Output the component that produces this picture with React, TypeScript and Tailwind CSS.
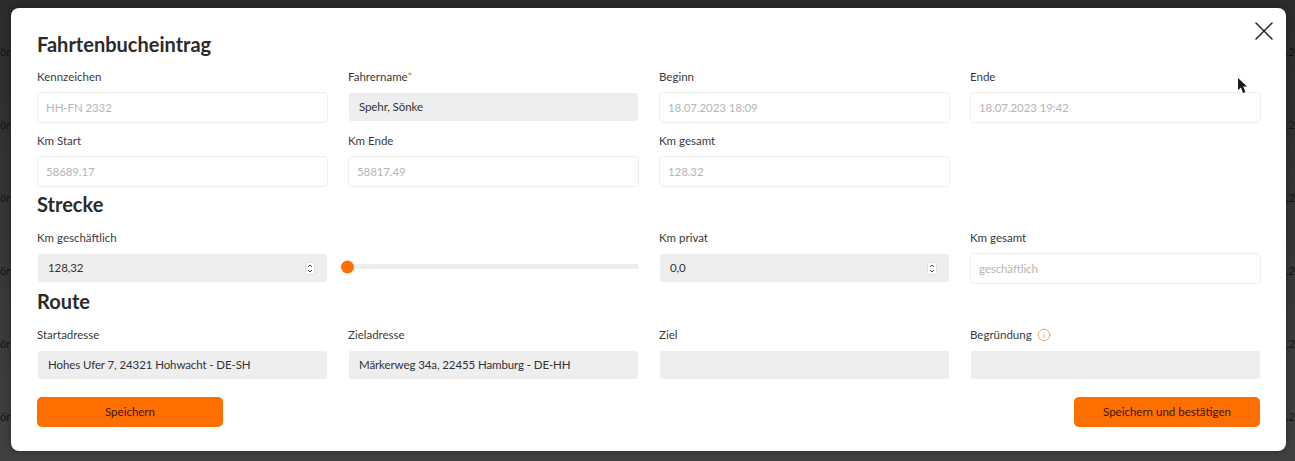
import { X, Info } from "lucide-react";

const font = "font-['Lato','Noto_Sans',sans-serif]";

const Label = ({ children }: { children: React.ReactNode }) => (
  <div className="h-[15px] text-[11.5px] leading-[15px] text-[#3a3a3a] mb-[8px]">{children}</div>
);

// white field with a pale border, value shown as placeholder
const OutlineInput = ({ label, value }: { label: React.ReactNode; value: string }) => (
  <div>
    <Label>{label}</Label>
    <div className="h-[31px] rounded-[4px] border border-[#eeeeee] bg-white pl-2 pr-2 flex items-center text-[11.5px] tracking-[-0.1px] text-[#b5b5b5]">
      {value}
    </div>
  </div>
);

const GreyInput = ({ label, value, spin }: { label: React.ReactNode; value?: string; spin?: boolean }) => (
  <div className="flex flex-col">
    <Label>{label}</Label>
    <div className="h-[28px] mt-px mx-px rounded-[2px] bg-[#eeeeee] pl-[10px] pr-3 flex items-center justify-between text-[11.5px] tracking-[-0.1px] text-[#333333]">
      <span>{value}</span>
      {spin && (
        <svg width="10" height="13" viewBox="0 0 10 13" fill="none" stroke="#444444" strokeWidth="1">
          <rect x="0.5" y="0.5" width="9" height="12" rx="2" fill="#ffffff" stroke="#d8d8d8" strokeWidth="0.75" />
          <path d="M3 5 5 3l2 2M3 8l2 2 2-2" />
        </svg>
      )}
    </div>
  </div>
);

const Heading = ({ children }: { children: React.ReactNode }) => (
  <h2 className="text-[20px] leading-[24px] font-bold text-[#2b2b2b]">{children}</h2>
);

const rows = [0, 1, 2, 3, 4, 5];

export default function App() {
  return (
    <div className={`${font} relative h-[461px] w-[1295px] overflow-hidden bg-gradient-to-b from-[#2c2c2c] to-[#414141]`}>
      {/* page behind the dialog */}
      <div className="pt-[44px] text-[11px] leading-[16px] text-[#141414]">
        {rows.map((i) => (
          <div key={i} className="flex h-[73px] justify-between">
            <span>ör</span>
            <span>.2</span>
          </div>
        ))}
      </div>

      <div className="absolute left-[11px] top-[8px] h-[443px] w-[1275px] rounded-[8px] bg-white pl-[26px] pr-[25px] pt-[24px] shadow-[0_0_8px_rgba(0,0,0,0.35)]">
        <button className="absolute right-[6px] top-[7px] text-[#222222]">
          <X size={32} strokeWidth={1.1} />
        </button>

        <Heading>Fahrtenbucheintrag</Heading>
        <div className="mt-[13px] grid grid-cols-4 gap-x-5 gap-y-[10px]">
          <OutlineInput label="Kennzeichen" value="HH-FN 2332" />
          <GreyInput label={<>Fahrername<span className="text-[#ff6f00]">*</span></>} value="Spehr, Sönke" />
          <OutlineInput label="Beginn" value="18.07.2023 18:09" />
          <OutlineInput label="Ende" value="18.07.2023 19:42" />
          <OutlineInput label="Km Start" value="58689.17" />
          <OutlineInput label="Km Ende" value="58817.49" />
          <OutlineInput label="Km gesamt" value="128.32" />
        </div>

        <div className="mt-[5px]"><Heading>Strecke</Heading></div>
        <div className="mt-[14px] grid grid-cols-4 gap-x-5">
          <GreyInput label="Km geschäftlich" value="128,32" spin />
          <div className="flex items-center pt-[19px]">
            <div className="relative h-[5px] w-full rounded-full bg-[#eeeeee]">
              <div className="absolute -left-[7px] top-1/2 h-[13px] w-[13px] -translate-y-1/2 rounded-full bg-[#ff6f00]" />
            </div>
          </div>
          <GreyInput label="Km privat" value="0,0" spin />
          <OutlineInput label="Km gesamt" value="geschäftlich" />
        </div>

        <div className="mt-[5px]"><Heading>Route</Heading></div>
        <div className="mt-[14px] grid grid-cols-4 gap-x-5">
          <GreyInput label="Startadresse" value="Hohes Ufer 7, 24321 Hohwacht - DE-SH" />
          <GreyInput label="Zieladresse" value="Märkerweg 34a, 22455 Hamburg - DE-HH" />
          <GreyInput label="Ziel" />
          <GreyInput
            label={
              <span className="flex items-center gap-[5px]">
                Begründung <Info size={14} strokeWidth={1.5} className="text-[#ec9d55]" />
              </span>
            }
          />
        </div>

        <div className="mt-[18px] flex justify-between pr-px">
          <button className="h-[30px] w-[186px] rounded-[5px] bg-[#ff6f00] text-[11.5px] text-[#3a1500]">Speichern</button>
          <button className="h-[30px] w-[186px] rounded-[5px] bg-[#ff6f00] text-[11.5px] text-[#3a1500]">Speichern und bestätigen</button>
        </div>

        {/* mouse pointer */}
        <svg className="absolute left-[1226px] top-[70px]" width="10" height="16" viewBox="0 0 10 16">
          <path d="M1 0v12l3-2.6L6 15l2.4-1L6.2 8.6H10z" fill="#1a1a1a" />
        </svg>
      </div>
    </div>
  );
}
